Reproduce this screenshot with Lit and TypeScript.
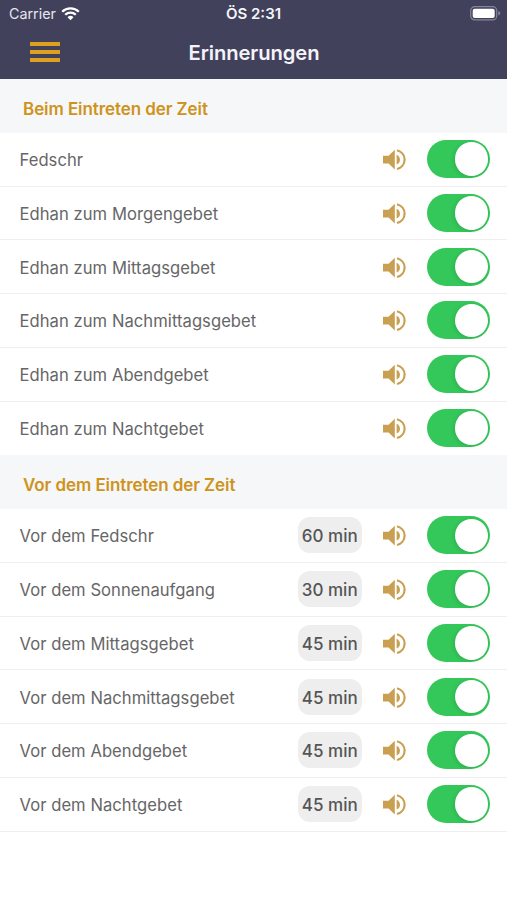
import { LitElement, html, css, svg } from "lit";
import { customElement, property } from "lit/decorators.js";

const speaker = svg`
  <path d="M0 8.800h5.600L11.800 2.800v19.800L5.600 16.600H0z"/>
  <path d="M13.600 7.800c2.100 .9 3.400 2.800 3.400 4.900s-1.300 4-3.400 4.900z"/>
  <path d="M14 3.200C18.500 4.300 21.600 8.100 21.600 12.600s-3.100 8.300-7.600 9.400" fill="none" stroke="#c9a052" stroke-width="2.200"/>`;

@customElement("toggle-switch")
class ToggleSwitch extends LitElement {
  static styles = css`
    :host {
      display: flex;
      align-items: center;
      justify-content: flex-end;
      box-sizing: border-box;
      width: 63px;
      height: 38px;
      padding: 2px;
      border-radius: 19px;
      background: #34c759;
    }
    .knob {
      width: 33.5px;
      height: 33.5px;
      border-radius: 50%;
      background: #fff;
      box-shadow: -1px 1px 4px rgba(0, 0, 0, 0.12);
    }
  `;
  render() {
    return html`<div class="knob"></div>`;
  }
}

@customElement("reminder-row")
class ReminderRow extends LitElement {
  @property() label = "";
  @property() lead = "";

  static styles = css`
    :host {
      display: flex;
      align-items: center;
      box-sizing: border-box;
      height: 53.75px;
      padding: 0 17px 0 19.5px;
      border-bottom: 1.5px solid #efeff1;
      background: #fff;
    }
    :host(.last) {
      border-bottom-color: transparent;
    }
    .label {
      flex: 1;
      padding-top: 2px;
      font-size: 16.6px;
      letter-spacing: 0.05px;
      color: #666;
      white-space: nowrap;
    }
    .lead {
      width: 64.5px;
      height: 36px;
      line-height: 38px;
      margin-right: 21px;
      border-radius: 12px;
      background: #eee;
      color: #555;
      font-size: 17px;
      font-weight: 500;
      text-align: center;
      white-space: nowrap;
    }
    .icon {
      width: 24px;
      height: 24px;
      margin-right: 20px;
      fill: #c9a052;
    }
  `;
  render() {
    return html`
      <span class="label">${this.label}</span>
      ${this.lead ? html`<span class="lead">${this.lead}</span>` : ""}
      <svg class="icon" viewBox="0 0 24 24">${speaker}</svg>
      <toggle-switch></toggle-switch>
    `;
  }
}

@customElement("app-root")
class AppRoot extends LitElement {
  static styles = css`
    :host {
      display: block;
      min-height: 900px;
      background: #fff;
      font-family: Inter, "Liberation Sans", sans-serif;
    }
    header {
      height: 79px;
      background: #41415c;
      color: #f4f4f8;
    }
    .status,
    .bar {
      display: grid;
      grid-template-columns: 1fr auto 1fr;
      align-items: center;
    }
    .status {
      height: 27px;
      padding: 0 6px 0 9px;
      font-size: 14.3px;
    }
    .carrier {
      display: flex;
      align-items: center;
      gap: 5.5px;
      color: #e6e6ef;
    }
    .clock {
      font-weight: 600;
      font-size: 15px;
      margin-right: 3px;
    }
    .battery {
      justify-self: end;
    }
    .bar {
      height: 50px;
      padding: 0 29px 0 30px;
    }
    .title {
      font-size: 20.2px;
      font-weight: 600;
      letter-spacing: -0.1px;
      padding-top: 1px;
    }
    .menu {
      display: flex;
      flex-direction: column;
      gap: 4px;
      width: 30px;
    }
    .menu i {
      height: 4px;
      background: #dda01f;
    }
    h2 {
      margin: 0;
      box-sizing: border-box;
      height: 53.75px;
      padding: 4px 23px 0;
      line-height: 53px;
      background: #f5f7f9;
      color: #cf931c;
      font-size: 17px;
      font-weight: 560;
      letter-spacing: -0.08px;
      white-space: nowrap;
    }
  `;

  private atTime = [
    "Fedschr",
    "Edhan zum Morgengebet",
    "Edhan zum Mittagsgebet",
    "Edhan zum Nachmittagsgebet",
    "Edhan zum Abendgebet",
    "Edhan zum Nachtgebet",
  ];
  private before = [
    ["Vor dem Fedschr", "60 min"],
    ["Vor dem Sonnenaufgang", "30 min"],
    ["Vor dem Mittagsgebet", "45 min"],
    ["Vor dem Nachmittagsgebet", "45 min"],
    ["Vor dem Abendgebet", "45 min"],
    ["Vor dem Nachtgebet", "45 min"],
  ];

  render() {
    return html`
      <header>
        <div class="status">
          <span class="carrier">Carrier
            <svg width="19" height="14" viewBox="0 0 19 14" fill="none" stroke="#fff" stroke-width="2.300">
              <path d="M1.200 4.700a11.800 11.800 0 0 1 16.600 0"/>
              <path d="M4.200 7.800a7.600 7.600 0 0 1 10.600 0"/>
              <path d="M9.500 13.200L6.500 10.200a4.300 4.300 0 0 1 6 0z" fill="#fff" stroke="none"/>
            </svg>
          </span>
          <span class="clock">ÖS 2:31</span>
          <svg class="battery" width="31" height="15" viewBox="0 0 31 15">
            <rect x=".7" y=".7" width="26" height="13.200" rx="4" fill="none" stroke="#85859a" stroke-width="1.200"/>
            <rect x="2.700" y="2.700" width="22" height="9.200" rx="2" fill="#fff"/>
            <path d="M28.300 5c1.300.5 2 1.300 2 2.300s-.7 1.800-2 2.300z" fill="#85859a"/>
          </svg>
        </div>
        <div class="bar">
          <div class="menu"><i></i><i></i><i></i></div>
          <span class="title">Erinnerungen</span>
        </div>
      </header>
      <h2>Beim Eintreten der Zeit</h2>
      ${this.atTime.map(
        (t, i) => html`<reminder-row class=${i === this.atTime.length - 1 ? "last" : ""} label=${t}></reminder-row>`
      )}
      <h2>Vor dem Eintreten der Zeit</h2>
      ${this.before.map(([t, m]) => html`<reminder-row label=${t} lead=${m}></reminder-row>`)}
    `;
  }
}
